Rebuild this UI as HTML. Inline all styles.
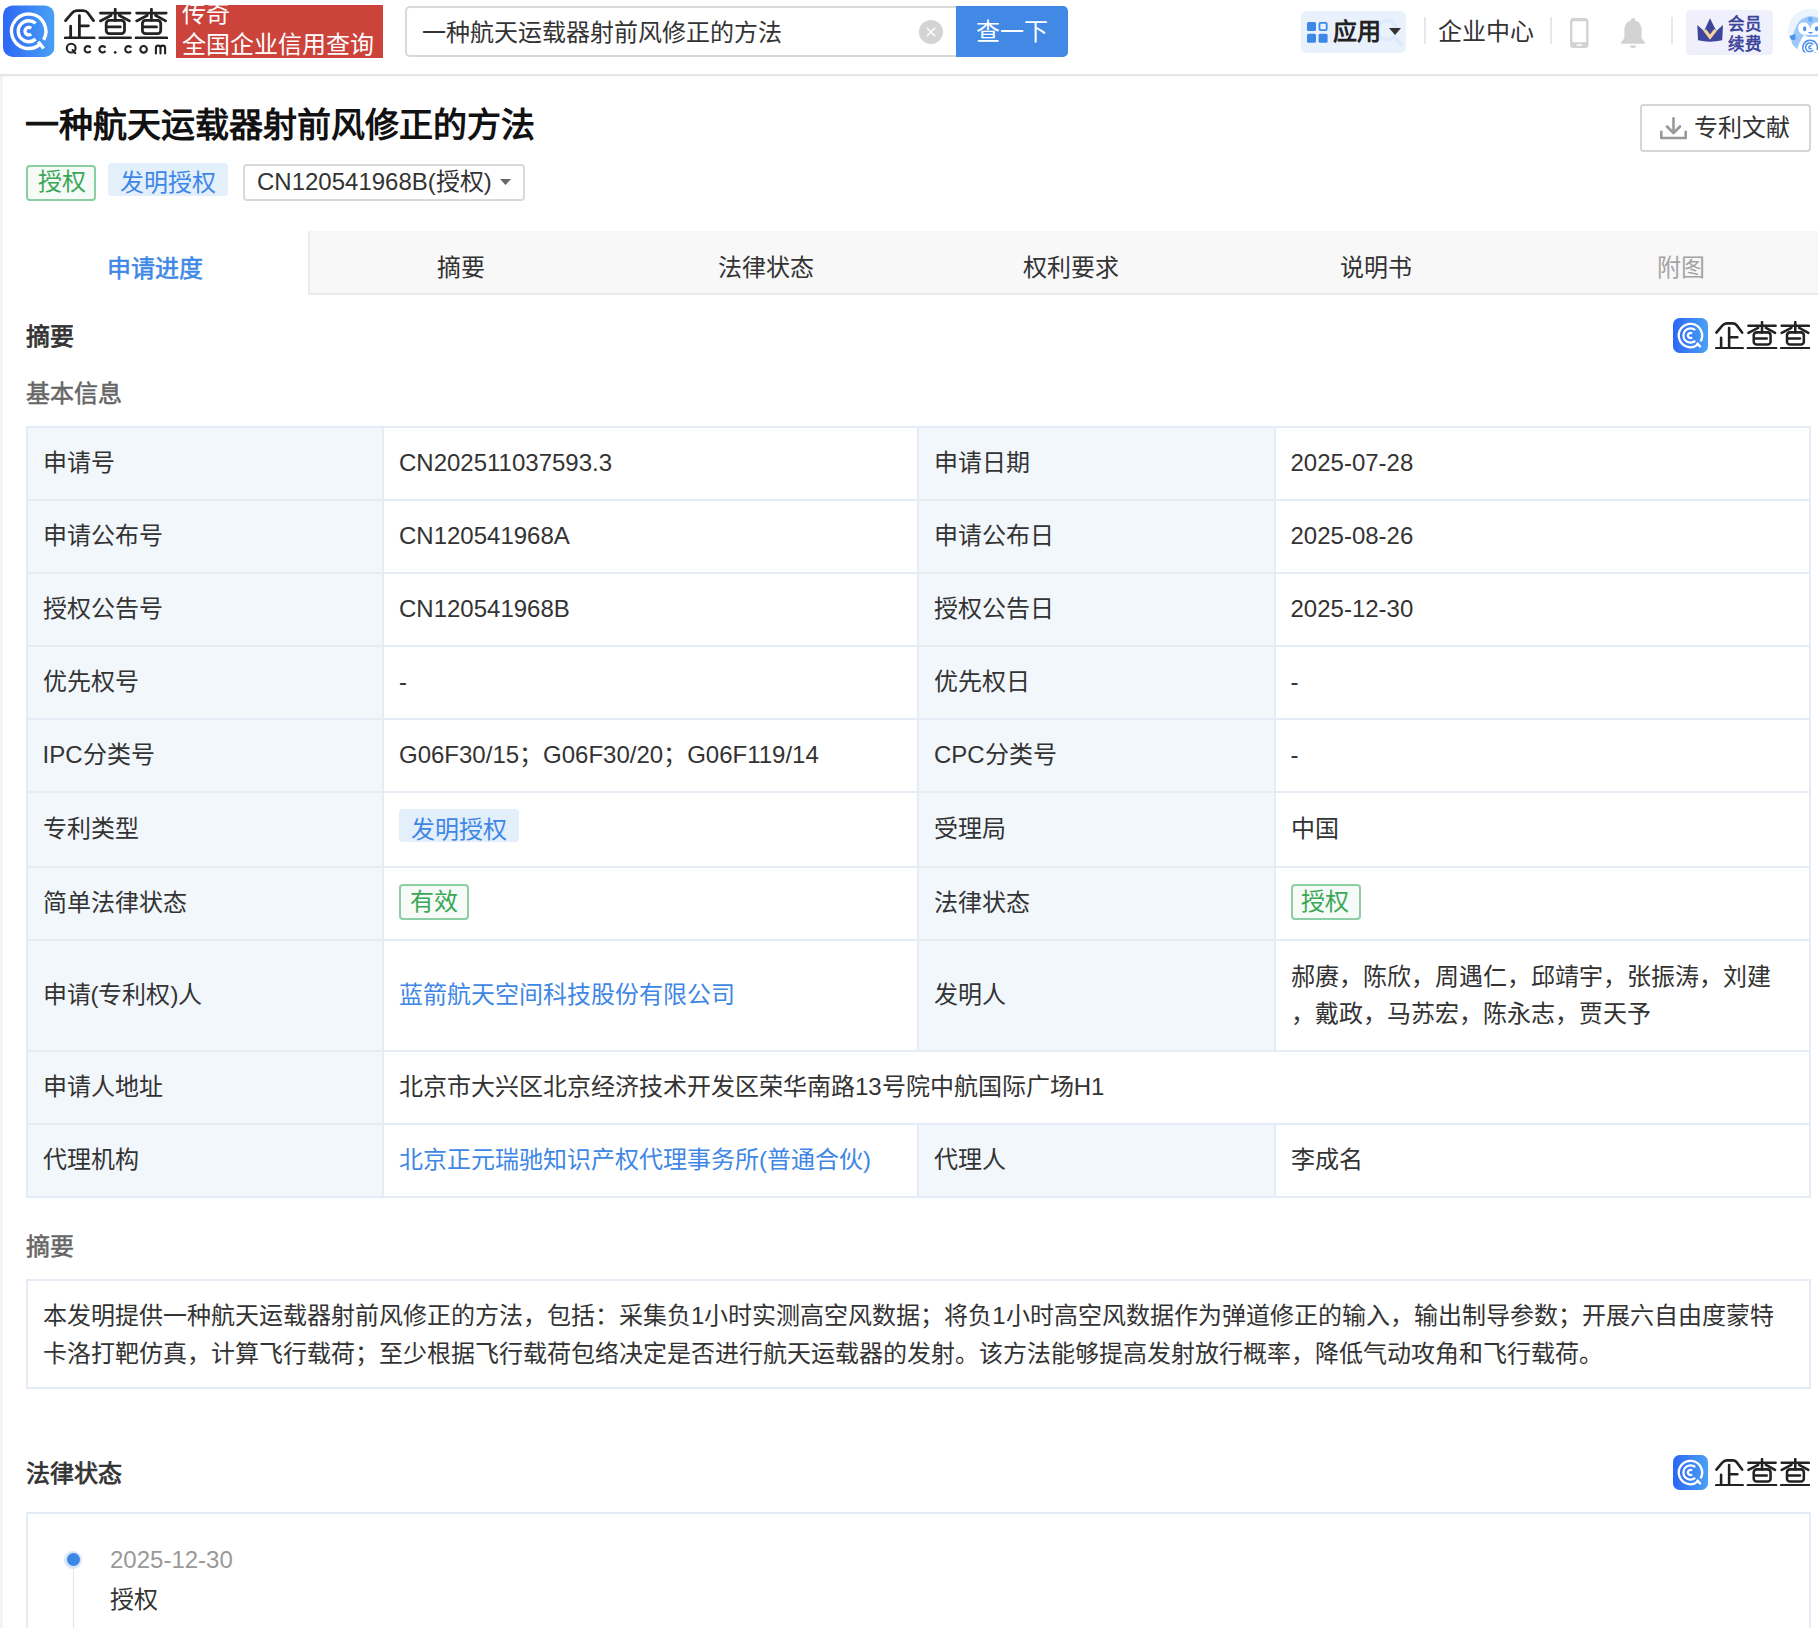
<!DOCTYPE html>
<html lang="zh-CN">
<head>
<meta charset="utf-8">
<style>
*{margin:0;padding:0;box-sizing:border-box}
html,body{width:1818px;height:1628px;overflow:hidden;background:#fff}
body{position:relative;font-family:"Liberation Sans",sans-serif;font-size:24px;color:#333;line-height:1}
.a{position:absolute;white-space:nowrap}
.strip{position:absolute;left:0;top:76px;width:3px;height:1552px;background:#f3f3f3}
/* header */
.hdr{position:absolute;left:0;top:0;width:1818px;height:74px;background:#fff}
.hline{position:absolute;left:0;top:74px;width:1818px;height:2px;background:#e6e6e6;box-shadow:0 1px 2px rgba(0,0,0,.04)}
.redbox{position:absolute;left:176px;top:5px;width:207px;height:53px;background:#cc433b;overflow:hidden}
.search{position:absolute;left:405px;top:6px;width:560px;height:51px;border:2px solid #d9d9d9;border-radius:5px 0 0 5px;border-right:none}
.btn{position:absolute;left:956px;top:6px;width:112px;height:51px;background:#4189e4;border-radius:0 5px 5px 0}
.clr{position:absolute;left:919px;top:20px;width:24px;height:24px;border-radius:50%;background:#d4d4d4}
.pill{position:absolute;left:1301px;top:11px;width:105px;height:42px;background:#e9f1fd;border-radius:6px}
.sep{position:absolute;width:2px;background:#e8e8e8}
.badge{position:absolute;left:1686px;top:10px;width:87px;height:45px;background:#eff0fb;border-radius:4px}
/* tags */
.tg{position:absolute;border:2px solid #8ccda3;background:#f6fbf8;color:#3aa757;border-radius:4px}
.tb{position:absolute;background:#e4effc;color:#3f87e5;border-radius:4px}
.dd{position:absolute;border:2px solid #d9d9d9;border-radius:4px}
.tabs{position:absolute;left:3px;top:231px;width:1815px;height:64px}
.tabbg{position:absolute;left:308px;top:231px;width:1510px;height:64px;background:#f8f8f8;border-left:2px solid #ececec;border-bottom:2px solid #ebebeb}
/* table */
.tbl{position:absolute;left:26px;top:426px;width:1785px;height:772px;border:2px solid #e4ecf6}
.lab{position:absolute;background:#f2f7fc}
.hl{position:absolute;height:2px;background:#e4ecf6}
.vl{position:absolute;width:2px;background:#e4ecf6}
.box{position:absolute;border:2px solid #e4ecf6}
.blue{color:#3f87e5}
.cell{display:flex;align-items:center;font-size:24px;line-height:29px;color:#333}

</style>
</head>
<body>
<div class="strip"></div>
<svg width="0" height="0" style="position:absolute">
<defs>
<linearGradient id="qg" x1="0" y1="0" x2="1" y2="0"><stop offset="0" stop-color="#2c67f5"/><stop offset="1" stop-color="#4aa0f5"/></linearGradient>
<symbol id="qicon" viewBox="0 0 100 100">
<rect x="0" y="0" width="100" height="100" rx="19" fill="url(#qg)"/>
<g fill="none" stroke="#fff" stroke-width="6.6">
<path d="M78.9 66.7 A33.4 33.4 0 1 0 71.5 75.6"/>
<path d="M68.5 70.5 L79 83.5"/>
<path d="M63.4 34.6 A20.4 20.4 0 1 0 63.4 65.4"/>
<path d="M54.6 44.5 A7.2 7.2 0 1 0 54.6 55.5"/>
</g>
</symbol>
<symbol id="qtext" viewBox="3.3 3.64 104.5 31.16">
<g fill="none" stroke="#222" stroke-width="2.8" stroke-linecap="round" stroke-linejoin="round">
<path d="M4.84 16.33 L11.49 8.47 Q13.3 6.2 16.33 6.2 L22.38 6.2 Q25.41 6.2 26.92 8.17 L32.97 16.33"/>
<path d="M18.75 11.2 L18.75 32.7 M18.75 21.5 L27.8 21.5 M9.98 22.0 L9.98 32.7 M4.5 33.6 L33.6 33.6"/>
<g id="cha">
<path d="M39.9 8.77 L69.6 8.77 M54.75 4.84 L54.75 16.1 M50.5 11.2 L39.9 16.6 M59.0 11.2 L69.0 16.6 M46.9 22.7 L59.9 22.7 M39.3 33.6 L70.2 33.6"/>
<rect x="45.7" y="16.1" width="18.4" height="13.3" rx="3.2"/>
</g>
<use href="#cha" x="36.4"/>
</g>
</symbol>
</defs>
</svg>
<!-- HEADER -->
<div class="hdr"></div>
<div class="hline"></div>

<!-- logo -->
<svg class="a" style="left:3px;top:5px" width="51.5" height="52.4"><use href="#qicon"/></svg>
<svg class="a" style="left:63.5px;top:7.6px" width="104" height="31"><use href="#qtext"/></svg>
<svg class="a" style="left:60px;top:4px" width="110" height="54" viewBox="0 0 110 54">
<g fill="none" stroke="#222" stroke-width="2.1" stroke-linecap="round">
<circle cx="11.2" cy="44.15" r="4.4"/>
<path d="M12.6 46 L15.2 49.2"/>
<path d="M30.1 43.1 A3.2 3.2 0 1 0 30.1 47.6"/>
<path d="M44.9 43.1 A3.2 3.2 0 1 0 44.9 47.6"/>
<path d="M70.7 43.1 A3.2 3.2 0 1 0 70.7 47.6"/>
<circle cx="83.6" cy="45.35" r="3.3"/>
<path d="M95.9 49.4 L95.9 44 Q95.9 41.6 98.2 41.6 Q100.5 41.6 100.5 44 L100.5 49.4 M100.5 44 Q100.5 41.6 102.8 41.6 Q105.1 41.6 105.1 44 L105.1 49.4"/>
</g>
<circle cx="55.2" cy="48.4" r="1.35" fill="#222"/>
</svg>
<div class="redbox">
<div class="a" style="left:6px;top:-6px;color:#fff;font-size:24px;line-height:29px">传奇</div>
<div class="a" style="left:6px;top:24.5px;color:#fff;font-size:24px;line-height:29px">全国企业信用查询</div>
</div>
<!-- search -->
<div class="search"></div>
<div class="a" style="left:422px;top:18px;font-size:24px;line-height:29px;color:#333">一种航天运载器射前风修正的方法</div>
<div class="clr"></div>
<svg class="a" style="left:919px;top:20px" width="24" height="24"><path d="M8 8 L16 16 M16 8 L8 16" stroke="#fff" stroke-width="1.6" fill="none"/></svg>
<div class="btn"></div>
<div class="a" style="left:976px;top:17px;font-size:24px;line-height:29px;color:#fff">查一下</div>
<!-- right nav -->
<div class="pill"></div>
<svg class="a" style="left:1373px;top:16px" width="32" height="34"><circle cx="14" cy="14" r="9.5" fill="none" stroke="#dde9fb" stroke-width="3"/><path d="M21 21 L28 28" stroke="#dde9fb" stroke-width="3.5" stroke-linecap="round"/></svg>
<svg class="a" style="left:1306.7px;top:21.7px" width="21" height="21">
<rect x="0" y="0" width="9" height="9" rx="1.5" fill="#3d87e6"/>
<rect x="12.5" y="0.9" width="7.2" height="7.2" rx="1" fill="none" stroke="#3d87e6" stroke-width="1.8"/>
<rect x="0" y="11.8" width="9" height="9" rx="1.5" fill="#3d87e6"/>
<rect x="11.6" y="11.8" width="9" height="9" rx="1.5" fill="#3d87e6"/>
</svg>
<div class="a" style="left:1333px;top:17px;font-size:24px;line-height:29px;color:#222;font-weight:bold">应用</div>
<svg class="a" style="left:1389px;top:28px" width="13" height="8"><path d="M0 0 L12 0 L6 7 Z" fill="#333"/></svg>
<div class="sep" style="left:1424px;top:17px;height:27px"></div>
<div class="a" style="left:1438px;top:17px;font-size:24px;line-height:29px;color:#333">企业中心</div>
<div class="sep" style="left:1550px;top:17px;height:27px"></div>
<svg class="a" style="left:1570px;top:18px" width="19" height="30">
<rect x="0" y="0" width="18.5" height="30" rx="3.5" fill="#d2d2d2"/>
<rect x="2.4" y="3.2" width="13.7" height="21" rx="1" fill="#fff"/>
<rect x="6.5" y="26.3" width="5.5" height="1.4" rx=".7" fill="#fff"/>
</svg>
<svg class="a" style="left:1621px;top:18px" width="24" height="31" viewBox="0 0 24 31">
<path d="M12 0 C13.3 0 14 .8 14 2 L14 2.6 C18.6 3.6 20.6 7.6 20.6 12.5 L20.6 20.3 L24 24.5 L24 25.8 L0 25.8 L0 24.5 L3.4 20.3 L3.4 12.5 C3.4 7.6 5.4 3.6 10 2.6 L10 2 C10 .8 10.7 0 12 0 Z" fill="#d2d2d2"/>
<path d="M8.8 27.4 L15.2 27.4 C15 29.2 13.8 30 12 30 C10.2 30 9 29.2 8.8 27.4 Z" fill="#d2d2d2"/>
</svg>
<div class="sep" style="left:1671px;top:17px;height:27px"></div>
<div class="badge"></div>
<svg class="a" style="left:1697px;top:18px" width="27" height="25" viewBox="0 0 27 25">
<path d="M0.3 7 L7 13 L13 0.3 L19.3 13 L26 7 L25.2 22.3 Q13 25 1 22.3 Z" fill="#3d469b"/>
<path d="M7.7 12 L13 19.2 L18.5 12" fill="none" stroke="#f6d69c" stroke-width="3.2" stroke-linejoin="miter"/>
</svg>
<div class="a" style="left:1728px;top:13.5px;font-size:16.5px;line-height:20.2px;color:#3d469b;font-weight:bold">会员<br>续费</div>
<svg class="a" style="left:1778px;top:4px" width="40" height="56" viewBox="0 0 40 56">
<defs><clipPath id="avc"><circle cx="32.2" cy="27" r="22.2"/></clipPath></defs>
<circle cx="32.2" cy="27" r="22.2" fill="#ebf4fe"/>
<g clip-path="url(#avc)">
<path d="M13.8 44 C13 36 15 29 18.5 22 C22 15 27 12.5 32.3 12.5 C40 12.5 46 16 48 22 L48 52 L20 52 Z" fill="#9cc9f8"/>
<path d="M20.3 24 C20.3 20 23 18.6 26 18.6 C29 18.6 31 20.5 32.3 25 C33.6 20.5 35.6 18.6 38.6 18.6 C42 18.6 45 20 45 24 C45 28.5 41 30.3 38 30.8 L26.5 30.8 C23 30.3 20.3 28.5 20.3 24 Z" fill="#fff"/>
<path d="M26 31 L30 33 L40 33 L48 30 L48 56 L17 56 C18 47 21 38 26 31 Z" fill="#fff"/>
<ellipse cx="32.3" cy="15.3" rx="2.3" ry="2.8" fill="#70acf4"/>
<ellipse cx="26.7" cy="24.8" rx="1.6" ry="2.5" fill="#4a8ff0"/>
<ellipse cx="38.5" cy="24.8" rx="1.6" ry="2.5" fill="#4a8ff0"/>
<path d="M30 28 Q32.3 31.3 35.2 28 Z" fill="#4a8ff0"/>
<path d="M11.4 32 L17.2 30 L17.6 35.5 L13.5 36.2 Z" fill="#4d90f0"/>
<g fill="none" stroke="#4a8ff0" stroke-width="1.5">
<path d="M39 46 A7.3 7.3 0 1 0 37.5 48.5"/>
<path d="M35.2 40.6 A4.3 4.3 0 1 0 35.2 46"/>
<path d="M33.5 42.3 A1.5 1.5 0 1 0 33.5 44.3"/>
</g>
</g>
</svg>

<!-- BODY -->

<!-- title -->
<div class="a" style="left:25px;top:105px;font-size:34px;line-height:40px;font-weight:bold;color:#111">一种航天运载器射前风修正的方法</div>
<div class="a" style="left:1640px;top:104px;width:171px;height:48px;border:2px solid #d6d6d6;border-radius:4px"></div>
<svg class="a" style="left:1660px;top:117px" width="27" height="23" viewBox="0 0 27 23">
<g fill="none" stroke="#999" stroke-width="2.6" stroke-linecap="round" stroke-linejoin="round">
<path d="M13.5 1.3 L13.5 15.5"/>
<path d="M7 9.5 L13.5 16 L20 9.5"/>
<path d="M1.3 14.8 L1.3 21 L25.7 21 L25.7 14.8"/>
</g>
</svg>
<div class="a" style="left:1694px;top:113px;font-size:24px;line-height:29px;color:#333">专利文献</div>
<!-- tags -->
<div class="tg" style="left:26px;top:165px;width:70px;height:36px"></div>
<div class="a" style="left:37.5px;top:167px;font-size:24px;line-height:29px;color:#3aa757">授权</div>
<div class="tb" style="left:108px;top:163px;width:120px;height:33px"></div>
<div class="a" style="left:120px;top:168px;font-size:24px;line-height:29px;color:#3f87e5">发明授权</div>
<div class="dd" style="left:243px;top:164px;width:282px;height:37px"></div>
<div class="a" style="left:257px;top:167px;font-size:24px;line-height:29px;color:#333">CN120541968B(授权)</div>
<svg class="a" style="left:500px;top:179px" width="11" height="7"><path d="M0 0 L11 0 L5.5 6 Z" fill="#666"/></svg>
<!-- tabs -->
<div class="tabbg"></div>
<div class="a" style="left:106.5px;top:253.5px;font-size:24px;line-height:29px;color:#3d87e6;-webkit-text-stroke:0.55px currentColor">申请进度</div>
<div class="a" style="left:437px;top:252.5px;font-size:24px;line-height:29px;color:#333">摘要</div>
<div class="a" style="left:718px;top:252.5px;font-size:24px;line-height:29px;color:#333">法律状态</div>
<div class="a" style="left:1023px;top:252.5px;font-size:24px;line-height:29px;color:#333">权利要求</div>
<div class="a" style="left:1340px;top:252.5px;font-size:24px;line-height:29px;color:#333">说明书</div>
<div class="a" style="left:1657px;top:252.5px;font-size:24px;line-height:29px;color:#a3a3a3">附图</div>
<!-- section: 摘要 -->
<div class="a" style="left:26px;top:321.5px;font-size:24px;line-height:29px;color:#333;-webkit-text-stroke:0.75px currentColor">摘要</div>
<svg class="a" style="left:1673px;top:318px" width="35" height="35"><use href="#qicon"/></svg>
<svg class="a" style="left:1714.5px;top:320.5px" width="95.5" height="28.5"><use href="#qtext"/></svg>
<div class="a" style="left:26px;top:378.5px;font-size:24px;line-height:29px;color:#666;-webkit-text-stroke:0.55px currentColor">基本信息</div>

<!-- TABLE -->
<div class="tbl"></div>
<div class="lab" style="left:28px;top:428px;width:354px;height:71px"></div>
<div class="lab" style="left:919px;top:428px;width:355px;height:71px"></div>
<div class="lab" style="left:28px;top:501px;width:354px;height:71px"></div>
<div class="lab" style="left:919px;top:501px;width:355px;height:71px"></div>
<div class="lab" style="left:28px;top:574px;width:354px;height:71px"></div>
<div class="lab" style="left:919px;top:574px;width:355px;height:71px"></div>
<div class="lab" style="left:28px;top:647px;width:354px;height:71px"></div>
<div class="lab" style="left:919px;top:647px;width:355px;height:71px"></div>
<div class="lab" style="left:28px;top:720px;width:354px;height:71px"></div>
<div class="lab" style="left:919px;top:720px;width:355px;height:71px"></div>
<div class="lab" style="left:28px;top:793px;width:354px;height:73px"></div>
<div class="lab" style="left:919px;top:793px;width:355px;height:73px"></div>
<div class="lab" style="left:28px;top:868px;width:354px;height:71px"></div>
<div class="lab" style="left:919px;top:868px;width:355px;height:71px"></div>
<div class="lab" style="left:28px;top:941px;width:354px;height:109px"></div>
<div class="lab" style="left:919px;top:941px;width:355px;height:109px"></div>
<div class="lab" style="left:28px;top:1052px;width:354px;height:71px"></div>
<div class="lab" style="left:28px;top:1125px;width:354px;height:71px"></div>
<div class="lab" style="left:919px;top:1125px;width:355px;height:71px"></div>
<div class="hl" style="left:28px;top:499px;width:1781px"></div>
<div class="hl" style="left:28px;top:572px;width:1781px"></div>
<div class="hl" style="left:28px;top:645px;width:1781px"></div>
<div class="hl" style="left:28px;top:718px;width:1781px"></div>
<div class="hl" style="left:28px;top:791px;width:1781px"></div>
<div class="hl" style="left:28px;top:866px;width:1781px"></div>
<div class="hl" style="left:28px;top:939px;width:1781px"></div>
<div class="hl" style="left:28px;top:1050px;width:1781px"></div>
<div class="hl" style="left:28px;top:1123px;width:1781px"></div>
<div class="vl" style="left:382px;top:428px;height:768px"></div>
<div class="vl" style="left:917px;top:428px;height:622px"></div>
<div class="vl" style="left:917px;top:1125px;height:71px"></div>
<div class="vl" style="left:1274px;top:428px;height:622px"></div>
<div class="vl" style="left:1274px;top:1125px;height:71px"></div>
<div class="a cell" style="left:42.5px;top:427px;height:71px;">申请号</div>
<div class="a cell" style="left:399px;top:427px;height:71px;">CN202511037593.3</div>
<div class="a cell" style="left:934px;top:427px;height:71px;">申请日期</div>
<div class="a cell" style="left:1290.5px;top:427px;height:71px;">2025-07-28</div>
<div class="a cell" style="left:42.5px;top:500px;height:71px;">申请公布号</div>
<div class="a cell" style="left:399px;top:500px;height:71px;">CN120541968A</div>
<div class="a cell" style="left:934px;top:500px;height:71px;">申请公布日</div>
<div class="a cell" style="left:1290.5px;top:500px;height:71px;">2025-08-26</div>
<div class="a cell" style="left:42.5px;top:573px;height:71px;">授权公告号</div>
<div class="a cell" style="left:399px;top:573px;height:71px;">CN120541968B</div>
<div class="a cell" style="left:934px;top:573px;height:71px;">授权公告日</div>
<div class="a cell" style="left:1290.5px;top:573px;height:71px;">2025-12-30</div>
<div class="a cell" style="left:42.5px;top:646px;height:71px;">优先权号</div>
<div class="a cell" style="left:399px;top:646px;height:71px;">-</div>
<div class="a cell" style="left:934px;top:646px;height:71px;">优先权日</div>
<div class="a cell" style="left:1290.5px;top:646px;height:71px;">-</div>
<div class="a cell" style="left:42.5px;top:719px;height:71px;">IPC分类号</div>
<div class="a cell" style="left:399px;top:719px;height:71px;">G06F30/15；G06F30/20；G06F119/14</div>
<div class="a cell" style="left:934px;top:719px;height:71px;">CPC分类号</div>
<div class="a cell" style="left:1290.5px;top:719px;height:71px;">-</div>
<div class="a cell" style="left:42.5px;top:792px;height:73px;">专利类型</div>
<div class="a cell" style="left:934px;top:792px;height:73px;">受理局</div>
<div class="a cell" style="left:1290.5px;top:792px;height:73px;">中国</div>
<div class="a cell" style="left:42.5px;top:867px;height:71px;">简单法律状态</div>
<div class="a cell" style="left:934px;top:867px;height:71px;">法律状态</div>
<div class="a cell" style="left:42.5px;top:940px;height:109px;">申请(专利权)人</div>
<div class="a cell" style="left:399px;top:940px;height:109px;"><span class="blue">蓝箭航天空间科技股份有限公司</span></div>
<div class="a cell" style="left:934px;top:940px;height:109px;">发明人</div>
<div class="a cell" style="left:42.5px;top:1051px;height:71px;">申请人地址</div>
<div class="a cell" style="left:399px;top:1051px;height:71px;">北京市大兴区北京经济技术开发区荣华南路13号院中航国际广场H1</div>
<div class="a cell" style="left:42.5px;top:1124px;height:71px;">代理机构</div>
<div class="a cell" style="left:399px;top:1124px;height:71px;"><span class="blue">北京正元瑞驰知识产权代理事务所(普通合伙)</span></div>
<div class="a cell" style="left:934px;top:1124px;height:71px;">代理人</div>
<div class="a cell" style="left:1290.5px;top:1124px;height:71px;">李成名</div>
<div class="tb" style="left:399px;top:809px;width:120px;height:33px"></div>
<div class="a" style="left:411px;top:814.5px;font-size:24px;line-height:29px;color:#3f87e5">发明授权</div>
<div class="tg" style="left:399px;top:884px;width:70px;height:36px"></div>
<div class="a" style="left:410px;top:887px;font-size:24px;line-height:29px;color:#3aa757">有效</div>
<div class="tg" style="left:1291px;top:884px;width:70px;height:36px"></div>
<div class="a" style="left:1301px;top:887px;font-size:24px;line-height:29px;color:#3aa757">授权</div>
<div class="a" style="left:1291px;top:957.5px;font-size:24px;line-height:37.4px;color:#333">郝赓，陈欣，周遇仁，邱靖宇，张振涛，刘建<br>，戴政，马苏宏，陈永志，贾天予</div>

<!-- abstract -->
<div class="a" style="left:26px;top:1231.5px;font-size:24px;line-height:29px;color:#666;-webkit-text-stroke:0.55px currentColor">摘要</div>
<div class="box" style="left:26px;top:1279px;width:1785px;height:110px"></div>
<div class="a" style="left:43px;top:1297px;font-size:24px;line-height:38px;color:#333">本发明提供一种航天运载器射前风修正的方法，包括：采集负1小时实测高空风数据；将负1小时高空风数据作为弹道修正的输入，输出制导参数；开展六自由度蒙特<br>卡洛打靶仿真，计算飞行载荷；至少根据飞行载荷包络决定是否进行航天运载器的发射。该方法能够提高发射放行概率，降低气动攻角和飞行载荷。</div>
<!-- legal -->
<div class="a" style="left:26px;top:1459px;font-size:24px;line-height:29px;color:#333;-webkit-text-stroke:0.75px currentColor">法律状态</div>
<svg class="a" style="left:1673px;top:1455px" width="35" height="35"><use href="#qicon"/></svg>
<svg class="a" style="left:1714.5px;top:1457.5px" width="95.5" height="28.5"><use href="#qtext"/></svg>
<div class="a" style="left:26px;top:1512px;width:1785px;height:200px;border:2px solid #e4ecf6"></div>
<div class="a" style="left:73px;top:1569px;width:1px;height:70px;background:#e3e3e3"></div>
<div class="a" style="left:64px;top:1550.5px;width:18.4px;height:18.4px;border-radius:50%;background:#d5e5fb"></div>
<div class="a" style="left:66.6px;top:1553px;width:13.4px;height:13.4px;border-radius:50%;background:#3c87e6"></div>
<div class="a" style="left:110px;top:1544.5px;font-size:24px;line-height:29px;color:#999">2025-12-30</div>
<div class="a" style="left:110px;top:1585px;font-size:24px;line-height:29px;color:#333">授权</div>
</body>
</html>
